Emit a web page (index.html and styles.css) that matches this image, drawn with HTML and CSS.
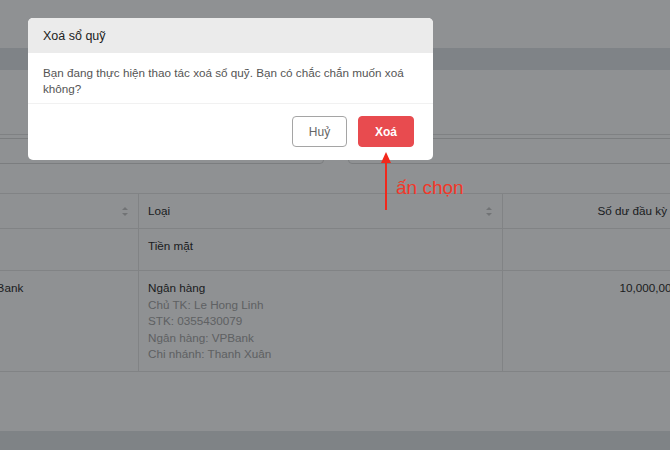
FILE: index.html
```html
<!DOCTYPE html>
<html lang="vi">
<head>
<meta charset="utf-8">
<link rel="stylesheet" href="styles.css">
</head>
<body>
<div class="page">
  <div class="top-space"></div>
  <div class="band"></div>
  <div class="toolbar"></div>
  <div class="filters">
    <div class="input input-a"></div>
    <div class="input input-b"></div>
  </div>
  <div class="table">
    <div class="row head">
      <div class="cell c1"><span></span><i class="sort"></i></div>
      <div class="cell c2"><span>Loại</span><i class="sort"></i></div>
      <div class="cell c3 num"><span>Số dư đầu kỳ</span><i class="sort"></i></div>
    </div>
    <div class="row r1">
      <div class="cell c1"></div>
      <div class="cell c2"><span>Tiền mặt</span></div>
      <div class="cell c3 num"><span>0</span></div>
    </div>
    <div class="row r2">
      <div class="cell c1"><span>VPBank</span></div>
      <div class="cell c2 stack">
        <span>Ngân hàng</span>
        <span class="muted">Chủ TK: Le Hong Linh</span>
        <span class="muted">STK: 0355430079</span>
        <span class="muted">Ngân hàng: VPBank</span>
        <span class="muted">Chi nhánh: Thanh Xuân</span>
      </div>
      <div class="cell c3 num"><span>10,000,000</span></div>
    </div>
  </div>
  <div class="bottom-space"></div>
  <div class="bottom-band"></div>
</div>

<div class="overlay"></div>

<div class="modal">
  <div class="modal-head">Xoá sổ quỹ</div>
  <div class="modal-body">Bạn đang thực hiện thao tác xoá sổ quỹ. Bạn có chắc chắn muốn xoá không?</div>
  <div class="modal-foot">
    <button class="btn btn-cancel">Huỷ</button>
    <button class="btn btn-danger">Xoá</button>
  </div>
</div>

<div class="annot">
  <svg class="arrow" width="12" height="60" viewBox="0 0 12 60">
    <polygon points="6,0 11,11 1,11" fill="#f2281c"/>
    <rect x="5" y="10" width="2" height="48" fill="#f2281c"/>
  </svg>
  <span class="annot-text">ấn chọn</span>
</div>
</body>
</html>
```
FILE: styles.css
```css
html, body {
  margin: 0;
  padding: 0;
}
body {
  width: 670px;
  height: 450px;
  overflow: hidden;
  position: relative;
  font-family: "Liberation Sans", Arial, sans-serif;
  background: #ffffff;
}
.page {
  margin-left: -28px;
  width: 730px;
  display: flex;
  flex-direction: column;
}
.top-space { height: 48px; }
.band { height: 22px; background: #e3e6e9; }
.toolbar { height: 64px; border-bottom: 1px solid #e2e2e2; }
.filters {
  display: flex;
  gap: 24px;
  padding-top: 3px;
  height: 26px;
}
.input {
  height: 24px;
  border: 1px solid #dcdcdc;
  border-radius: 4px;
  background: #fff;
}
.input-a { width: 350px; }
.input-b { flex: 1; margin-right: -10px; }
.table {
  margin-top: 29px;
  border-top: 1px solid #e6e6e6;
  font-size: 11.7px;
  color: #333;
}
.row {
  display: grid;
  grid-template-columns: 166px 364px 200px;
  border-bottom: 1px solid #e6e6e6;
}
.head { height: 34px; }
.r1 { height: 41px; }
.r2 { height: 100px; }
.cell {
  padding: 9px 9px 0 9px;
  line-height: 16.5px;
  display: flex;
  align-items: flex-start;
}
.head .cell {
  padding-top: 0;
  align-items: center;
  justify-content: space-between;
}
.c2, .c3 { border-left: 1px solid #e6e6e6; }
.num { justify-content: flex-end; padding-right: 24px; }
.head .num { justify-content: flex-end; gap: 6px; padding-right: 22px; }
.stack { flex-direction: column; }
.muted { color: #a9a9a9; }
.sort {
  display: inline-block;
  width: 7px;
  height: 9px;
  position: relative;
}
.sort::before, .sort::after {
  content: "";
  position: absolute;
  left: 0;
  border-left: 3.5px solid transparent;
  border-right: 3.5px solid transparent;
}
.sort::before { top: 0; border-bottom: 3.5px solid #c9c9c9; }
.sort::after { bottom: 0; border-top: 3.5px solid #c9c9c9; }
.bottom-space { height: 59px; }
.bottom-band { height: 30px; background: #e3e6e8; }

.overlay {
  position: absolute;
  inset: 0;
  background: rgba(0, 4, 9, 0.44);
}

.modal {
  position: absolute;
  left: 28px;
  top: 18px;
  width: 405px;
  height: 142px;
  background: #fff;
  border-radius: 5px;
  overflow: hidden;
  display: flex;
  flex-direction: column;
}
.modal-head {
  height: 35px;
  background: #ebebeb;
  display: flex;
  align-items: center;
  padding-left: 15px;
  font-size: 12.5px;
  color: #222;
}
.modal-body {
  padding: 12px 15px 7px 15px;
  font-size: 11.7px;
  line-height: 15.5px;
  color: #555;
  border-bottom: 1px solid #f1f1f1;
}
.modal-foot {
  flex: 1;
  display: flex;
  justify-content: flex-end;
  align-items: flex-start;
  gap: 11px;
  padding: 12px 19px 0 0;
}
.btn {
  height: 31px;
  border-radius: 4px;
  font-family: "Liberation Sans", Arial, sans-serif;
  font-size: 12px;
  padding: 0;
  cursor: pointer;
}
.btn-cancel {
  width: 55px;
  background: #fff;
  border: 1px solid #a5a5a5;
  color: #666;
}
.btn-danger {
  width: 56px;
  background: #e84b4f;
  border: 1px solid #e84b4f;
  color: #fff;
  font-weight: bold;
}

.annot {
  position: absolute;
  left: 380px;
  top: 152px;
  display: flex;
  align-items: flex-start;
}
.arrow { display: block; }
.annot-text {
  margin-top: 25px;
  margin-left: 4px;
  font-size: 19px;
  color: #f2382a;
  font-family: "Liberation Sans", Arial, sans-serif;
}
```
